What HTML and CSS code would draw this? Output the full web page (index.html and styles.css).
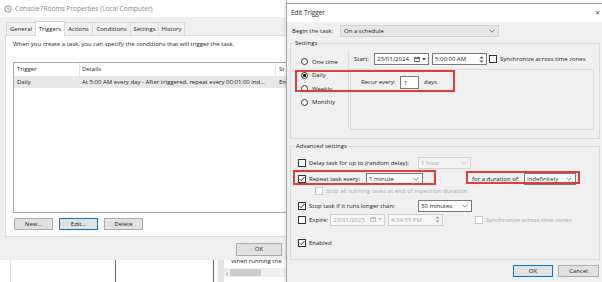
FILE: index.html
```html
<!DOCTYPE html>
<html>
<head>
<meta charset="utf-8">
<link rel="stylesheet" href="styles.css">
</head>
<body>
<div class="desk">
  <div class="win under">
    <div class="u-edge"></div>
    <div class="u-box"></div>
    <div class="u-bar"></div>
    <div class="u-pane">
      <div class="u-text">When running the</div>
      <div class="u-scroll"><span class="u-arrow">&lsaquo;</span><span class="u-thumb"></span></div>
    </div>
  </div>

  <div class="win props">
    <div class="tbar">
      <svg class="ticon" width="8" height="8" viewBox="0 0 8 8"><circle cx="4" cy="4" r="3.2" fill="none" stroke="#8c8c8c" stroke-width="0.9"/><path d="M4 2.1V4.2H5.7" fill="none" stroke="#8c8c8c" stroke-width="0.8"/></svg>
      <span>Console7Rooms Properties (Local Computer)</span>
    </div>
    <div class="tabs">
      <span class="tab">General</span>
      <span class="tab sel">Triggers</span>
      <span class="tab">Actions</span>
      <span class="tab">Conditions</span>
      <span class="tab">Settings</span>
      <span class="tab">History</span>
    </div>
    <div class="panel">
      <p class="intro">When you create a task, you can specify the conditions that will trigger the task.</p>
      <div class="list">
        <div class="lhead"><span class="c1">Trigger</span><span class="c2">Details</span><span class="c3">St</span></div>
        <div class="lrow"><span class="c1">Daily</span><span class="c2">At 5:00 AM every day - After triggered, repeat every 00:01:00 ind...</span><span class="c3">En</span></div>
      </div>
      <div class="btns">
        <span class="btn w39">New...</span>
        <span class="btn w39 focus">Edit...</span>
        <span class="btn w39">Delete</span>
      </div>
    </div>
    <div class="okrow"><span class="btn w46">OK</span></div>
  </div>

  <div class="win edit">
    <div class="etbar"><span>Edit Trigger</span><span class="close">&#x2715;</span></div>
    <div class="begin">
      <span class="blbl">Begin the task:</span>
      <div class="combo gray w159"><span>On a schedule</span><svg class="chev" width="6" height="4" viewBox="0 0 6 4"><path d="M0.5 0.7L3 3.2L5.5 0.7" fill="none" stroke="#6a6a6a" stroke-width="0.8"/></svg></div>
    </div>

    <fieldset class="grp settings">
      <legend>Settings</legend>
      <div class="sgrid">
        <div class="radios">
          <div class="radio"><i class="rb"></i><span>One time</span></div>
          <div class="radio"><i class="rb on"></i><span>Daily</span></div>
          <div class="radio"><i class="rb"></i><span>Weekly</span></div>
          <div class="radio"><i class="rb"></i><span>Monthly</span></div>
        </div>
        <div class="sright">
          <div class="startrow">
            <span class="startlbl">Start:</span>
            <div class="field date mr3"><span class="ftxt">23/01/2024</span><i class="cal"></i><svg class="dd" width="4" height="3" viewBox="0 0 4 3"><path d="M0 0H4L2 2.6Z" fill="#444"/></svg></div>
            <div class="field time mr2"><span class="ftxt">5:00:00 AM</span><svg class="spin" width="5" height="9" viewBox="0 0 5 9"><path d="M0.4 3.6L2.5 1.2L4.6 3.6Z M0.4 5.4L2.5 7.8L4.6 5.4Z" fill="#555"/></svg></div>
            <i class="cb"></i><span class="cbt">Synchronize across time zones</span>
          </div>
          <div class="recur">
            <span class="rlbl">Recur every:</span>
            <div class="field num">1</div>
            <span class="days">days</span>
          </div>
        </div>
      </div>
    </fieldset>

    <fieldset class="grp adv">
      <legend>Advanced settings</legend>
      <div class="arow delay">
        <span class="lab w120"><i class="cb"></i><span class="cbt">Delay task for up to (random delay):</span></span>
        <div class="combo dis w53"><span>1 hour</span><svg class="chev" width="6" height="4" viewBox="0 0 6 4"><path d="M0.5 0.7L3 3.2L5.5 0.7" fill="none" stroke="#b5b5b5" stroke-width="0.8"/></svg></div>
      </div>
      <div class="arow repeat">
        <span class="lab w68"><i class="cb on"><svg width="6" height="6" viewBox="0 0 6 6"><path d="M0.6 3.1L2.2 4.7L5.4 1.1" fill="none" stroke="#222" stroke-width="0.9"/></svg></i><span class="cbt">Repeat task every:</span></span>
        <div class="combo w57"><span>1 minute</span><svg class="chev" width="6" height="4" viewBox="0 0 6 4"><path d="M0.5 0.7L3 3.2L5.5 0.7" fill="none" stroke="#6a6a6a" stroke-width="0.8"/></svg></div>
        <span class="durlbl">for a duration of:</span>
        <div class="combo w52"><span>Indefinitely</span><svg class="chev" width="6" height="4" viewBox="0 0 6 4"><path d="M0.5 0.7L3 3.2L5.5 0.7" fill="none" stroke="#6a6a6a" stroke-width="0.8"/></svg></div>
      </div>
      <div class="arow stopall">
        <i class="cb dis"></i><span class="cbt muted">Stop all running tasks at end of repetition duration</span>
      </div>
      <div class="arow stoptask">
        <span class="lab w120"><i class="cb on"><svg width="6" height="6" viewBox="0 0 6 6"><path d="M0.6 3.1L2.2 4.7L5.4 1.1" fill="none" stroke="#222" stroke-width="0.9"/></svg></i><span class="cbt">Stop task if it runs longer than:</span></span>
        <div class="combo w54"><span>30 minutes</span><svg class="chev" width="6" height="4" viewBox="0 0 6 4"><path d="M0.5 0.7L3 3.2L5.5 0.7" fill="none" stroke="#6a6a6a" stroke-width="0.8"/></svg></div>
      </div>
      <div class="arow expire">
        <span class="lab w32"><i class="cb"></i><span class="cbt">Expire:</span></span>
        <div class="field date dis mr3"><span class="ftxt">23/01/2025</span><i class="cal"></i><svg class="dd" width="4" height="3" viewBox="0 0 4 3"><path d="M0 0H4L2 2.6Z" fill="#bdbdbd"/></svg></div>
        <div class="field time dis"><span class="ftxt">4:34:55 PM</span><svg class="spin" width="5" height="9" viewBox="0 0 5 9"><path d="M0.4 3.6L2.5 1.2L4.6 3.6Z M0.4 5.4L2.5 7.8L4.6 5.4Z" fill="#9a9a9a"/></svg></div>
        <i class="cb dis ml32"></i><span class="cbt muted">Synchronize across time zones</span>
      </div>
      <div class="arow enabled">
        <i class="cb on"><svg width="6" height="6" viewBox="0 0 6 6"><path d="M0.6 3.1L2.2 4.7L5.4 1.1" fill="none" stroke="#222" stroke-width="0.9"/></svg></i><span class="cbt">Enabled</span>
      </div>
    </fieldset>

    <div class="dlgbtns">
      <span class="btn focus w40">OK</span>
      <span class="btn w41">Cancel</span>
    </div>

    <div class="mark m1"></div>
    <div class="mark m2"></div>
    <div class="mark m3"></div>
  </div>
</div>
</body>
</html>
```

FILE: styles.css
```css
* { box-sizing: border-box; }
html, body { margin: 0; padding: 0; }
body {
  width: 602px; height: 282px; overflow: hidden; background: #fff;
  font-family: "Open Sans", "Noto Sans", sans-serif; font-size: 6px; line-height: 8px; color: #1c1c1c;
}
.desk { position: relative; width: 602px; height: 282px; overflow: hidden; background: #fff; }
.win { position: absolute; }

/* underlying window */
.under { left: 0; top: 250px; width: 287px; height: 32px; background: #fff; display: flex; }
.u-edge { width: 11px; border-right: 1px solid #e6e6e6; }
.u-box { margin-left: 104px; width: 99px; border-left: 1px solid #6a6a6a; border-right: 1px solid #6a6a6a; }
.u-bar { margin-left: 4px; width: 6px; background: #e3e3e3; }
.u-pane { flex: 1; display: flex; flex-direction: column; }
.u-text { margin-top: 7px; padding-left: 7px; white-space: nowrap; }
.u-scroll { margin-top: 3px; height: 9px; background: #f0f0f0; display: flex; align-items: center; }
.u-arrow { width: 6px; text-align: center; color: #606060; font-size: 8px; line-height: 9px; }
.u-thumb { width: 31px; height: 7px; background: #cdcdcd; }

/* properties window */
.props { left: 0; top: 0; width: 287px; height: 260px; background: #f0f0f0; border-right: 1px solid #b9b9b9; overflow: hidden; }
.tbar { height: 17px; background: #fff; display: flex; align-items: center; gap: 3px; padding-left: 4px; color: #8a8a8a; font-size: 6.6px; white-space: nowrap; }
.ticon { flex: none; }
.tabs { height: 18px; display: flex; align-items: flex-end; padding-left: 6px; }
.tab { height: 13px; line-height: 12px; border: 1px solid #d9d9d9; border-bottom: none; margin-right: -1px; background: #f0f0f0; text-align: center; white-space: nowrap; }
.tab:nth-child(1) { width: 30px; }
.tab:nth-child(2) { width: 30px; }
.tab:nth-child(3) { width: 29px; }
.tab:nth-child(4) { width: 39px; }
.tab:nth-child(5) { width: 29px; }
.tab:nth-child(6) { width: 27px; }
.tab.sel { height: 15px; line-height: 14px; background: #fff; margin-bottom: -1px; position: relative; z-index: 1; }
.panel { margin-left: 5px; width: 292px; height: 202px; background: #fff; border: 1px solid #d9d9d9; padding: 4px 0 0 7px; }
.intro { margin: 0; white-space: nowrap; }
.list { margin-top: 14px; width: 290px; height: 151px; border: 1px solid #a9a9a9; background: #fff; }
.lhead, .lrow { display: flex; white-space: nowrap; }
.lhead { height: 13px; line-height: 13px; }
.lhead span { border-right: 1px solid #e5e5e5; }
.lrow { height: 12px; line-height: 12px; background: #e8e8e8; }
.c1 { width: 66px; padding-left: 3px; flex: none; }
.c2 { width: 196px; padding-left: 2px; flex: none; overflow: hidden; }
.c3 { padding-left: 3px; flex: 1; }
.btns { margin-top: 5px; margin-left: 1px; display: flex; gap: 6px; }
.btn { height: 12px; line-height: 10px; background: #e1e1e1; border: 1px solid #adadad; text-align: center; white-space: nowrap; }
.btn.focus { border-color: #0078d7; }
.w39 { width: 39px; }
.w40 { width: 40px; }
.w41 { width: 41px; }
.w46 { width: 46px; height: 13px; line-height: 11px; }
.okrow { padding-top: 6px; padding-right: 4px; display: flex; justify-content: flex-end; }

/* edit trigger dialog */
.edit { left: 286px; top: 3px; width: 320px; height: 285px; background: #f0f0f0; border: 1px solid #a6a6a6; box-shadow: -1px 0 3px rgba(0,0,0,0.12); }
.etbar { height: 18px; background: #fff; display: flex; align-items: center; justify-content: space-between; padding: 0 5px 0 4px; font-size: 6.4px; }
.close { font-size: 6px; color: #333; }
.begin { margin: 3px 0 0 5px; height: 12px; display: flex; align-items: center; }
.blbl { width: 48px; white-space: nowrap; }
.combo { height: 12px; border: 1px solid #7a7a7a; background: #fff; display: flex; align-items: center; justify-content: space-between; padding: 0 3px 0 2px; white-space: nowrap; flex: none; }
.combo.gray { background: #e5e5e5; border-color: #d2d2d2; padding-left: 3px; }
.combo.dis { background: #f3f3f3; border-color: #d4d4d4; color: #a8a8a8; }
.w159 { width: 159px; }
.w53 { width: 53px; }
.w54 { width: 54px; }
.w57 { width: 57px; }
.w52 { width: 52px; }
.chev { flex: none; }

.grp { margin: 2px 5px 0 3px; padding: 0; border: 1px solid #dcdcdc; min-width: 0; }
.grp legend { margin-left: 3px; padding: 0 1px; line-height: 8px; }
.adv legend { margin-left: 4px; }
.adv { margin-top: 3px; padding-bottom: 10px; }
.sgrid { display: flex; height: 91px; }
.radios { width: 58px; margin-top: 3px; height: 78px; border-right: 1px solid #dcdcdc; padding: 5px 0 0 10px; flex: none; }
.radio { height: 13.5px; display: flex; align-items: center; gap: 4px; white-space: nowrap; }
.rb { width: 7px; height: 7px; border: 1px solid #333; border-radius: 50%; background: #fff; flex: none; }
.rb.on { background: radial-gradient(circle, #222 0 1.5px, #fff 2px); }
.sright { flex: 1; margin: 0 5px 0 1px; }
.startrow { height: 12px; margin-top: 6px; padding-left: 4px; display: flex; align-items: center; white-space: nowrap; }
.startlbl { width: 20px; flex: none; }
.field { height: 12px; border: 1px solid #7a7a7a; background: #fff; display: flex; align-items: center; padding-left: 2px; white-space: nowrap; flex: none; }
.field.dis { border-color: #cfcfcf; background: #f7f7f7; color: #a8a8a8; }
.date { width: 55px; }
.time { width: 55px; }
.ftxt { flex: 1; }
.cal { width: 6px; height: 5px; border: 1px solid #707070; border-top-width: 2px; margin-right: 2px; flex: none; }
.field.dis .cal { border-color: #c4c4c4; }
.dd { margin-right: 2px; flex: none; }
.spin { margin-right: 2px; flex: none; }
.mr3 { margin-right: 3px; }
.mr2 { margin-right: 2px; }
.ml32 { margin-left: 32px; }
.cb { width: 8px; height: 8px; border: 1px solid #333; background: #fff; flex: none; display: flex; align-items: center; justify-content: center; }
.cb.dis { border-color: #c8c8c8; }
.cbt { margin-left: 3px; white-space: nowrap; }
.muted { color: #a8a8a8; }
.recur { margin-top: 4px; height: 61px; border: 1px solid #dcdcdc; padding: 6px 0 0 10px; display: flex; align-items: flex-start; }
.rlbl { width: 39px; line-height: 13px; white-space: nowrap; flex: none; }
.num { width: 19px; height: 13px; padding-left: 3px; }
.days { margin-left: 5px; line-height: 13px; }

.arow { height: 13px; padding-left: 7px; display: flex; align-items: center; white-space: nowrap; }
.lab { display: flex; align-items: center; flex: none; }
.w120 { width: 120px; }
.w68 { width: 68px; }
.w32 { width: 32px; }
.delay { margin-top: 6px; }
.repeat { margin-top: 3px; }
.stopall { height: 12px; padding-left: 24px; }
.stoptask { margin-top: 2px; }
.expire { margin-top: 1px; }
.enabled { margin-top: 10px; }
.durlbl { margin-left: 49px; width: 52px; flex: none; }

.dlgbtns { margin-top: 5px; padding-right: 6px; display: flex; justify-content: flex-end; gap: 5px; }
.dlgbtns .btn { height: 12px; }

.mark { position: absolute; border: 2px solid #e23c3c; }
.m1 { left: 8px; top: 66px; width: 160px; height: 22px; }
.m2 { left: 6px; top: 166px; width: 143px; height: 15px; }
.m3 { left: 179px; top: 167px; width: 114px; height: 13px; }
```
